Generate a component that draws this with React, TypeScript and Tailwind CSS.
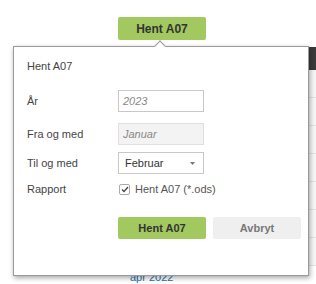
export default function App() {
  const rows = [0, 1, 2, 3, 4, 5, 6];
  return (
    <div className="relative w-[316px] h-[284px] overflow-hidden bg-white font-['Liberation_Sans',Arial,sans-serif] text-[#333]">
      {/* page behind */}
      <div className="pt-[17px]">
        <div className="ml-[118px] w-[88px] h-[23px] rounded-[2px] bg-[#a2c860] flex items-center justify-center text-[12px] font-bold text-[#333]">
          Hent A07
        </div>
        <div className="ml-[60px]">
          <div className="mt-[7px] h-[23px] bg-[#3b3b3b]" />
          <div className="bg-[#f7f7f7]">
            {rows.map((r) => (
              <div key={r} className="h-[28px] border-b border-[#e2e2e2]" />
            ))}
          </div>
        </div>
      </div>
      <div className="absolute left-[130px] top-[271px] text-[11px] leading-[13px] text-[#2a6fa8]">apr 2022</div>

      {/* arrow */}
      <div className="absolute left-[156px] top-[42px] w-[8px] h-[8px] rotate-45 bg-white border-l border-t border-[#9a9a9a] z-20" />

      {/* popover */}
      <div className="absolute left-[13px] top-[46px] w-[296px] h-[230px] bg-white border border-[#9a9a9a] shadow-[1px_2px_5px_rgba(0,0,0,0.35)] z-10 pl-[13px] pr-[7px] pt-[12px] text-[11px] text-[#444]">
        <div className="h-[14px] leading-[14px]">Hent A07</div>

        <div className="mt-[17px] flex items-center h-[22px]">
          <div className="w-[91px]">År</div>
          <div className="w-[86px] h-[22px] border border-[#c8c8c8] bg-white flex items-center px-[4px] italic text-[#888]">
            2023
          </div>
        </div>

        <div className="mt-[11px] flex items-center h-[22px]">
          <div className="w-[91px]">Fra og med</div>
          <div className="w-[86px] h-[22px] border border-[#e0e0e0] bg-[#f3f3f3] flex items-center px-[4px] italic text-[#888]">
            Januar
          </div>
        </div>

        <div className="mt-[7px] flex items-center h-[22px]">
          <div className="w-[91px]">Til og med</div>
          <div className="w-[86px] h-[22px] border border-[#c8c8c8] bg-white flex items-center justify-between pl-[6px] pr-[8px] text-[#333]">
            <span>Februar</span>
            <svg width="5" height="3" viewBox="0 0 5 3">
              <path d="M0 0h5L2.5 3z" fill="#777" />
            </svg>
          </div>
        </div>

        <div className="mt-[10px] flex items-center h-[11px]">
          <div className="w-[92px]">Rapport</div>
          <div className="w-[11px] h-[11px] border border-[#aaa] rounded-[2px] flex items-center justify-center">
            <svg width="8" height="7" viewBox="0 0 8 7">
              <path d="M1 3.5l2 2 4-4.5" stroke="#444" strokeWidth="1.3" fill="none" />
            </svg>
          </div>
          <span className="ml-[5px] text-[#555]">Hent A07 (*.ods)</span>
        </div>

        <div className="mt-[22px] ml-[91px] flex gap-[7px]">
          <div className="w-[88px] h-[22px] shrink-0 rounded-[2px] bg-[#a2c860] flex items-center justify-center font-bold text-[11px] text-[#333]">
            Hent A07
          </div>
          <div className="w-[88px] h-[22px] shrink-0 rounded-[2px] bg-[#efefef] flex items-center justify-center font-bold text-[11px] text-[#777]">
            Avbryt
          </div>
        </div>
      </div>
    </div>
  );
}
